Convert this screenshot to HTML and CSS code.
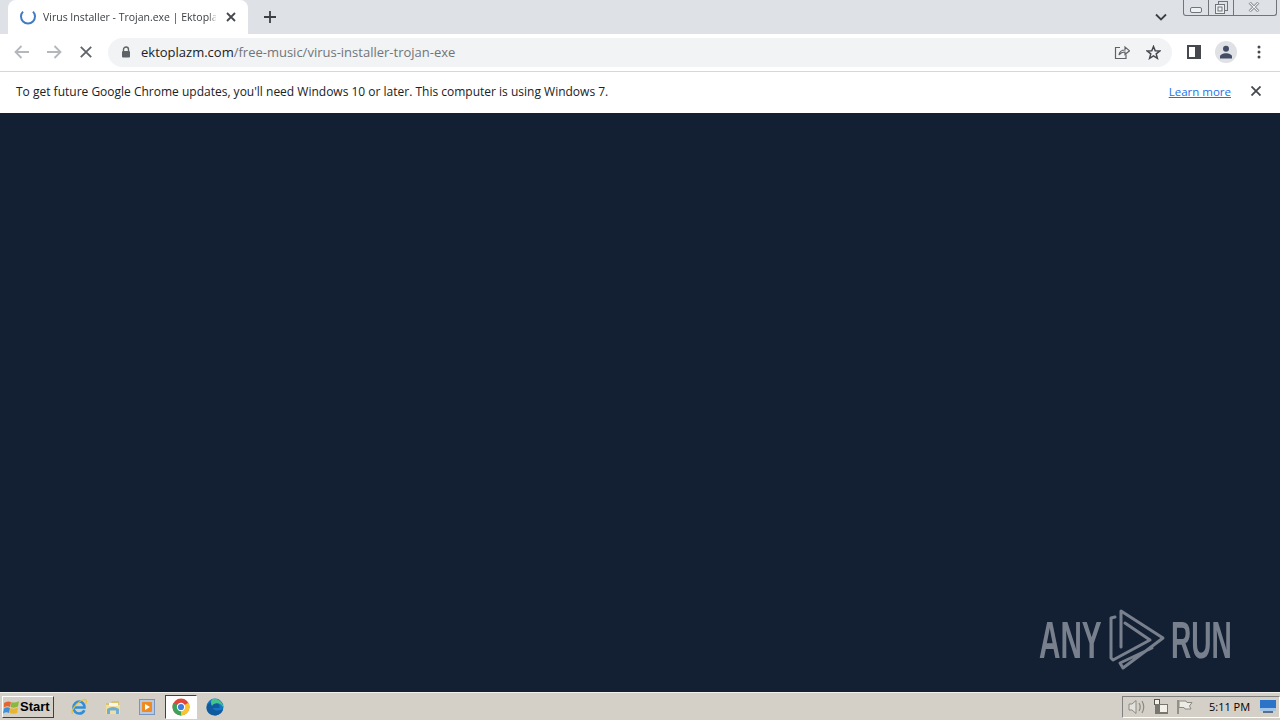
FILE: index.html
```html
<!DOCTYPE html>
<html lang="en">
<head>
  <meta charset="UTF-8">
  <title>Virus Installer - Trojan.exe | Ektoplazm</title>
  <link rel="stylesheet" href="styles.css">
</head>
<body>
  <!-- Tab strip -->
  <div class="tabstrip">
    <div class="tab">
      <svg class="spinner" width="16" height="16" viewBox="0 0 16 16"><path d="M3 2.6A7 7 0 1 0 13 2.6" fill="none" stroke="#3f7cc4" stroke-width="2"/></svg>
      <span class="tab-title">Virus Installer - Trojan.exe | Ektoplazm</span>
      <svg class="tab-close" width="10" height="10" viewBox="0 0 10 10"><path d="M1 1L9 9M9 1L1 9" stroke="#45484d" stroke-width="1.8"/></svg>
    </div>
    <svg class="new-tab" width="12" height="12" viewBox="0 0 12 12"><path d="M6 0V12M0 6H12" stroke="#3c4043" stroke-width="1.8"/></svg>
    <div class="strip-right">
      <svg class="tab-search" width="12" height="8" viewBox="0 0 12 8"><path d="M1 1.5L6 6.5L11 1.5" fill="none" stroke="#3c4043" stroke-width="1.8"/></svg>
      <div class="window-btns">
        <div class="win-btn win-min"><svg width="12" height="6" viewBox="0 0 12 6"><rect x="0.5" y="0.5" width="11" height="5" rx="1.5" fill="#eef0f2" stroke="#70757c"/></svg></div>
        <div class="win-btn win-max"><svg width="13" height="13" viewBox="0 0 13 13"><rect x="3.5" y="0.5" width="9" height="9" fill="none" stroke="#70757c"/><rect x="0.5" y="3.5" width="9" height="9" fill="#eef0f2" stroke="#70757c"/><rect x="3" y="6" width="4" height="4" fill="none" stroke="#70757c"/></svg></div>
        <div class="win-btn win-close"><svg width="12" height="10" viewBox="0 0 12 10"><path d="M1.5 0.5L10.5 9.5M10.5 0.5L1.5 9.5" stroke="#70757c" stroke-width="2.6"/><path d="M1.5 0.5L10.5 9.5M10.5 0.5L1.5 9.5" stroke="#eef0f2" stroke-width="1.1"/></svg></div>
      </div>
    </div>
  </div>

  <!-- Toolbar -->
  <div class="toolbar">
    <svg class="nav-icon" width="16" height="14" viewBox="0 0 16 14"><path d="M15 7H2M7.5 1L1.5 7L7.5 13" fill="none" stroke="#b4b7bb" stroke-width="1.8"/></svg>
    <svg class="nav-icon" width="16" height="14" viewBox="0 0 16 14"><path d="M1 7H14M8.5 1L14.5 7L8.5 13" fill="none" stroke="#b4b7bb" stroke-width="1.8"/></svg>
    <svg class="nav-icon" width="12" height="12" viewBox="0 0 12 12"><path d="M0.8 0.8L11.2 11.2M11.2 0.8L0.8 11.2" stroke="#5f6368" stroke-width="1.8"/></svg>
    <div class="omnibox">
      <svg class="lock" width="10" height="12" viewBox="0 0 10 12"><path d="M2.5 5V3.5a2.5 2.5 0 0 1 5 0V5" fill="none" stroke="#5f6368" stroke-width="1.4"/><rect x="1" y="5" width="8" height="6.5" rx="1" fill="#5f6368"/></svg>
      <span class="url"><span class="url-host">ektoplazm.com</span>/free-music/virus-installer-trojan-exe</span>
      <svg class="share" width="16" height="15" viewBox="0 0 16 15"><path d="M6 2.5H1.5V13.5H12V9.5" fill="none" stroke="#5f6368" stroke-width="1.2"/><path d="M5 10C5.5 6.5 8 5 11 5V2L15.5 5.8L11 9.5V7C8.5 7 6.5 8 5 10Z" fill="none" stroke="#5f6368" stroke-width="1.2"/></svg>
      <svg class="star" width="15" height="15" viewBox="0 0 15 15"><path d="M7.5 1.5L9.2 5.7L13.8 6L10.2 8.9L11.4 13.3L7.5 10.9L3.6 13.3L4.8 8.9L1.2 6L5.8 5.7Z" fill="none" stroke="#45484d" stroke-width="1.5"/></svg>
    </div>
    <svg class="sidebar-icon" width="14" height="14" viewBox="0 0 14 14"><rect x="1" y="1" width="12" height="12" fill="none" stroke="#45484d" stroke-width="2"/><rect x="8" y="1" width="5" height="12" fill="#45484d"/></svg>
    <div class="avatar"><svg width="14" height="14" viewBox="0 0 14 14"><circle cx="7" cy="3.8" r="3" fill="#434d68"/><path d="M1 13.5V11.5C1 9.5 4 8.2 7 8.2S13 9.5 13 11.5V13.5Z" fill="#434d68"/></svg></div>
    <svg class="menu-icon" width="4" height="14" viewBox="0 0 4 14"><circle cx="2" cy="2" r="1.5" fill="#45484d"/><circle cx="2" cy="7" r="1.5" fill="#45484d"/><circle cx="2" cy="12" r="1.5" fill="#45484d"/></svg>
  </div>

  <!-- Infobar -->
  <div class="infobar">
    <span class="info-text">To get future Google Chrome updates, you'll need Windows 10 or later. This computer is using Windows 7.</span>
    <a class="learn-more">Learn more</a>
    <svg class="info-close" width="10" height="10" viewBox="0 0 10 10"><path d="M0.5 0.5L9.5 9.5M9.5 0.5L0.5 9.5" stroke="#45484d" stroke-width="1.8"/></svg>
  </div>

  <!-- Page -->
  <div class="page">
    <div class="watermark">
      <span class="wm-text wm-any">ANY</span>
      <svg class="wm-logo" width="58" height="64" viewBox="0 0 58 64"><g fill="none" stroke="#79808d" stroke-width="3" stroke-linejoin="round" stroke-linecap="round"><path d="M7 9L3 10V50L5 52L42 32L17 15"/><path d="M13 39V3L55 30L15 60L12 55L44 40"/></g></svg>
      <span class="wm-text wm-run">RUN</span>
    </div>
  </div>

  <!-- Taskbar -->
  <div class="taskbar">
    <div class="start-btn">
      <svg width="17" height="16" viewBox="0 0 17 16"><path d="M1 4Q4 1.5 8 3L7 8Q4 6.5 1 8.5Z" fill="#e2672c"/><path d="M8.5 3Q12 4.5 16 2L15 7.5Q11.5 9.5 7.5 8Z" fill="#8ab83e"/><path d="M1 9.5Q4 7.5 7 9L6 14Q3.5 12.5 0 14.5Z" fill="#3f8fd6"/><path d="M7.5 9Q11 10.5 15 8.5L14 14Q10.5 15.5 6.5 14Z" fill="#e9b52f"/></svg>
      <span>Start</span>
    </div>
    <div class="quick">
      <div class="quick-item">
        <svg width="18" height="18" viewBox="0 0 18 18"><path d="M5 9.5H14.5C14.5 6 12 3.5 9.3 3.5S3.5 6 3.5 9.5S6 15.5 9.3 15.5C11.5 15.5 13.5 14.3 14.3 12.2" fill="none" stroke="#2f8fd8" stroke-width="2.6"/><path d="M2.5 16C0.5 13 6 4.5 13 2C16.5 0.8 17.5 3 15.5 6" fill="none" stroke="#e8c13a" stroke-width="1.2"/></svg>
      </div>
      <div class="quick-item">
        <svg width="18" height="18" viewBox="0 0 18 18"><path d="M2 5H7L8 3H15V8H2Z" fill="#d9c26a"/><rect x="2" y="7" width="14" height="9" fill="#f1dfa0"/><rect x="5" y="5" width="9" height="3" fill="#f6f6f0"/><path d="M3 16V11Q9 7 15 11V16H12V12.5H6V16Z" fill="#6faed0"/></svg>
      </div>
      <div class="quick-item">
        <svg width="16" height="16" viewBox="0 0 16 16"><rect x="0.5" y="0.5" width="15" height="15" fill="#b9c8dc" stroke="#7b96bc"/><rect x="3" y="3" width="10" height="10" rx="1" fill="#ee8a22"/><path d="M6 5L11 8L6 11Z" fill="#fff"/></svg>
      </div>
      <div class="quick-item active">
        <svg width="18" height="18" viewBox="0 0 18 18"><circle cx="9" cy="9" r="8.5" fill="#e0463a"/><path d="M9 9L16.4 4.8A8.5 8.5 0 0 1 9 17.5Z" fill="#f7c52e"/><path d="M9 9L9 17.5A8.5 8.5 0 0 1 1.6 4.8Z" fill="#3ba456"/><circle cx="9" cy="9" r="4.2" fill="#fff"/><circle cx="9" cy="9" r="3.1" fill="#3f7ee0"/></svg>
      </div>
      <div class="quick-item">
        <svg width="18" height="18" viewBox="0 0 18 18"><circle cx="9" cy="9" r="8.5" fill="#1577c4"/><path d="M0.5 10C1 5.5 4.5 4 8 4C12 4 14 7 13.5 10H7C7.5 12.5 11.5 13.5 17 11.5C16 15 12.5 17.5 9 17.5C4.5 17.5 0.5 14.5 0.5 10Z" fill="#125a9e"/><path d="M6.5 1C11.5 -0.5 17 3.5 17.5 10C16 7 13 4.7 9.5 5.5C8 5.8 7 6.5 6 8C4.5 5.5 4.5 2.5 6.5 1Z" fill="#43c38e"/></svg>
      </div>
    </div>
    <div class="tray">
      <svg width="18" height="16" viewBox="0 0 18 16"><path d="M1 5H4L8 1.5V14.5L4 11H1Z" fill="#e4e2dc" stroke="#8a8a84"/><path d="M11 4Q13.5 8 11 12M14 2Q17.5 8 14 14" fill="none" stroke="#8a8a84" stroke-width="1.2"/></svg>
      <svg width="18" height="16" viewBox="0 0 18 16"><rect x="2.5" y="0.5" width="5" height="5" fill="#f3f1ea" stroke="#55554f"/><rect x="3" y="5" width="13" height="10" fill="#77776f"/><rect x="8" y="6" width="7" height="7" fill="#f3f1ea"/></svg>
      <svg width="18" height="16" viewBox="0 0 18 16"><path d="M2 1V15" stroke="#77776f" stroke-width="1.4"/><path d="M3 2H10L11 3.5H16L13.5 7L15 10H9L8 8.5H3Z" fill="#ecebe4" stroke="#8a8a84"/></svg>
      <span class="clock">5:11 PM</span>
      <svg class="desktop-icon" width="16" height="14" viewBox="0 0 16 14"><rect width="16" height="11" fill="#2b74c7"/><rect y="8" width="16" height="3" fill="#9fc4ea"/><rect x="3" y="11" width="10" height="2" fill="#5c6f88"/></svg>
    </div>
  </div>
</body>
</html>
```

FILE: styles.css
```css
/* General Reset */
* {
  margin: 0;
  padding: 0;
  box-sizing: border-box;
}

body {
  width: 1280px;
  height: 720px;
  overflow: hidden;
  display: flex;
  flex-direction: column;
  font-family: "Open Sans", "Noto Sans", sans-serif;
  font-size: 12px;
  color: #202124;
  background: #132033;
}

/* Tab strip */
.tabstrip {
  height: 34px;
  background: #dee1e6;
  display: flex;
  align-items: flex-end;
  padding-left: 8px;
}

.tab {
  width: 240px;
  height: 34px;
  background: #fff;
  border-radius: 8px 8px 0 0;
  display: flex;
  align-items: center;
  padding: 0 12px;
}

.spinner {
  flex: none;
}

.tab-title {
  margin-left: 7px;
  width: 175px;
  white-space: nowrap;
  overflow: hidden;
  font-size: 10.5px;
  color: #3c4043;
  -webkit-mask-image: linear-gradient(to right, #000 165px, transparent 175px);
  mask-image: linear-gradient(to right, #000 165px, transparent 175px);
}

.tab-close {
  margin-left: 10px;
  flex: none;
}

.new-tab {
  margin: 0 0 11px 16px;
}

.strip-right {
  margin-left: auto;
  align-self: stretch;
  display: flex;
  align-items: flex-start;
}

.tab-search {
  margin: 13px 16px 0 0;
}

.window-btns {
  width: 94px;
  height: 16px;
  margin-right: 3px;
  display: flex;
  border: 1px solid #70757c;
  border-top: none;
  border-radius: 0 0 3px 3px;
}

.win-btn {
  display: flex;
  align-items: center;
  justify-content: center;
  border-right: 1px solid #70757c;
}

.win-min { width: 25px; padding-top: 5px; }
.win-max { width: 25px; }
.win-close { flex: 1; border-right: none; padding: 0 2px 2px 0; }

/* Toolbar */
.toolbar {
  height: 38px;
  background: #fff;
  border-bottom: 1px solid #d5d7da;
  display: flex;
  align-items: center;
  padding: 0 0 1px 14px;
}

.nav-icon {
  flex: none;
  margin-right: 16px;
}

.nav-icon:nth-child(3) {
  margin-left: 2px;
}

.omnibox {
  width: 1064px;
  height: 29px;
  background: #f1f3f4;
  border-radius: 15px;
  display: flex;
  align-items: center;
  padding: 0 11px 0 13px;
}

.url {
  margin-left: 10px;
  font-size: 13px;
  color: #70757a;
}

.url-host {
  color: #202124;
}

.share {
  margin-left: auto;
}

.star {
  margin-left: 16px;
}

.sidebar-icon {
  margin-left: 15px;
}

.avatar {
  width: 22px;
  height: 22px;
  border-radius: 50%;
  background: #dfe1e5;
  margin-left: 14px;
  display: flex;
  align-items: center;
  justify-content: center;
}

.menu-icon {
  margin-left: 20px;
}

/* Infobar */
.infobar {
  height: 41px;
  background: #fff;
  display: flex;
  align-items: center;
  padding: 0 19px 3px 16px;
}

.info-text {
  font-size: 12px;
}

.learn-more {
  margin-left: auto;
  color: #1a73e8;
  text-decoration: underline;
  font-size: 11.5px;
}

.info-close {
  margin-left: 20px;
}

/* Page */
.page {
  flex: 1;
  position: relative;
  background: #132033;
}

.watermark {
  position: absolute;
  left: 1039px;
  top: 495px;
  display: flex;
  align-items: center;
}

.wm-logo {
  margin: 0 5px 0 6px;
  flex: none;
}

.wm-text {
  font-family: "Liberation Sans", sans-serif;
  font-weight: bold;
  font-size: 52px;
  line-height: 64px;
  color: #79808d;
  display: block;
  white-space: nowrap;
  transform-origin: left center;
}

.wm-any {
  width: 63px;
  transform: scaleX(0.57);
}

.wm-run {
  width: 61px;
  transform: scaleX(0.54);
}

/* Taskbar */
.taskbar {
  height: 28px;
  background: #d4d0c8;
  border-top: 1px solid #f2f0ea;
  display: flex;
  align-items: center;
  padding-left: 2px;
}

.start-btn {
  width: 52px;
  height: 22px;
  background: #d4d0c8;
  border: 1px solid;
  border-color: #fff #404040 #404040 #fff;
  display: flex;
  align-items: center;
  font-family: "Liberation Sans", sans-serif;
  font-weight: bold;
  font-size: 13px;
  color: #000;
}

.quick {
  display: flex;
  align-items: center;
  margin-left: 9px;
  gap: 2px;
}

.quick-item {
  width: 32px;
  height: 24px;
  display: flex;
  align-items: center;
  justify-content: center;
}

.quick-item.active {
  background: #fff;
  border: 1px solid;
  border-color: #404040 #fff #fff #404040;
}

.tray {
  margin-left: auto;
  width: 158px;
  height: 22px;
  border: 1px solid;
  border-color: #808080 #fff #fff #808080;
  display: flex;
  align-items: center;
  gap: 6px;
  padding: 0 3px 0 5px;
}

.clock {
  margin-left: 9px;
  font-size: 11px;
  white-space: nowrap;
  color: #000;
}

.desktop-icon {
  margin-left: auto;
}
```
